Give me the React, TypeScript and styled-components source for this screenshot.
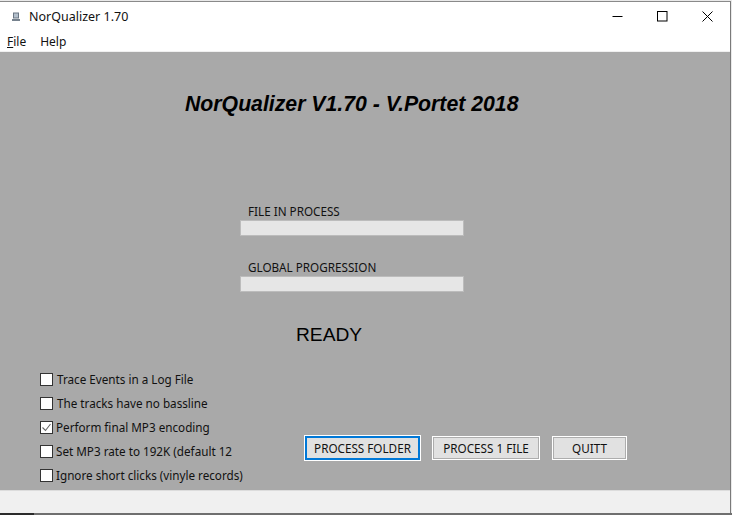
import * as React from "react";
import styled, { createGlobalStyle } from "styled-components";

const GlobalStyle = createGlobalStyle`
  html, body {
    margin: 0;
    padding: 0;
    background: #ffffff;
  }
  body {
    width: 732px;
    height: 515px;
    overflow: hidden;
    font-family: "Noto Sans", "Liberation Sans", sans-serif;
  }
`;

const Desktop = styled.div`
  width: 732px;
  height: 515px;
  box-sizing: border-box;
  padding-top: 1px;
  display: flex;
  flex-direction: column;
  background: #e9e9e9;
`;

const Window = styled.div`
  flex: 1;
  min-height: 0;
  display: flex;
  flex-direction: column;
  margin-right: 1px;
  background: #ffffff;
  border-top: 1px solid #8a8a8a;
  border-right: 1px solid #7a7a7a;
`;

const BottomEdge = styled.div`
  height: 2px;
  background: linear-gradient(to right, #2b2b2b 34px, #6f6f6f 34px);
`;

const TitleBar = styled.div`
  height: 29px;
  display: flex;
  align-items: center;
  color: #111111;
  font-size: 12.5px;
`;

const AppIcon = styled.svg`
  width: 10px;
  height: 10px;
  margin: 0 8px 0 11px;
`;

const TitleText = styled.span`
  flex: 1;
`;

const CaptionButton = styled.div`
  width: 45px;
  height: 29px;
  display: flex;
  align-items: center;
  justify-content: center;
`;

const MenuBar = styled.div`
  height: 20px;
  display: flex;
  align-items: center;
  gap: 14px;
  padding-left: 7px;
  font-size: 12px;
  color: #111111;
  border-bottom: 1px solid #f0f0f0;
`;

const Accel = styled.span`
  text-decoration: underline;
`;

const Panel = styled.div`
  flex: 1;
  display: flex;
  flex-direction: column;
  background: #a9a9a9;
`;

const Heading = styled.h1`
  margin: 40px 0 0 185px;
  font-family: "Liberation Sans", Arial, sans-serif;
  font-size: 21.25px;
  line-height: 24px;
  font-style: italic;
  font-weight: 700;
  color: #000000;
  white-space: nowrap;
`;

const ProgressGroup = styled.div<{ $top: number }>`
  margin: ${(p) => p.$top}px 0 0 240px;
  width: 224px;
`;

const ProgressLabel = styled.div`
  padding-left: 8px;
  height: 16px;
  line-height: 14px;
  font-size: 11.7px;
  color: #111111;
`;

const ProgressBar = styled.div`
  height: 16px;
  box-sizing: border-box;
  background: #e6e6e6;
  border: 1px solid #bcbcbc;
`;

const Status = styled.div`
  margin: 31px 0 0 296px;
  font-family: "Liberation Sans", Arial, sans-serif;
  font-size: 19.2px;
  line-height: 24px;
  color: #000000;
`;

const Controls = styled.div`
  display: flex;
  margin: 25px 0 0 40px;
`;

const Options = styled.div`
  width: 265px;
  display: flex;
  flex-direction: column;
  gap: 10px;
`;

const Option = styled.label`
  display: flex;
  align-items: center;
  height: 14px;
  font-size: 11.7px;
  white-space: nowrap;
  color: #111111;
`;

const Box = styled.span<{ $gap: number }>`
  width: 13px;
  height: 13px;
  box-sizing: border-box;
  margin-right: ${(p) => p.$gap}px;
  flex: none;
  display: flex;
  background: #ffffff;
  border: 1px solid #333333;
`;

const Buttons = styled.div`
  display: flex;
  gap: 12px;
  margin-top: 64px;
  align-self: flex-start;
`;

const Button = styled.button<{ $width: number; $focused?: boolean }>`
  width: ${(p) => p.$width}px;
  height: 24px;
  box-sizing: border-box;
  padding: 0;
  font-family: "Noto Sans", "Liberation Sans", sans-serif;
  font-size: 11.7px;
  color: #111111;
  background: #e1e1e1;
  border: 1px solid #ffffff;
  outline: 1px solid ${(p) => (p.$focused ? "#ffffff" : "#adadad")};
  outline-offset: -2px;
  ${(p) => p.$focused && "border: 2px solid #0078d7; outline: none; box-shadow: 0 0 0 1px #ffffff;"}
`;

const StatusBar = styled.div`
  height: 22px;
  background: #f0f0f0;
  border-top: 1px solid #dcdcdc;
`;

const options = [
  { label: "Trace Events in a Log File", gap: 4, checked: false },
  { label: "The tracks have no bassline", gap: 4, checked: false },
  { label: "Perform final MP3 encoding", gap: 3, checked: true },
  { label: "Set MP3 rate to 192K (default 12", gap: 3, checked: false },
  { label: "Ignore short clicks (vinyle records)", gap: 3, checked: false },
];

const App = () => (
  <Desktop>
    <GlobalStyle />
    <Window>
      <TitleBar>
        <AppIcon viewBox="0 0 10 10">
          <rect x="2.5" y="1" width="5" height="5" fill="#b4c0cc" stroke="#6a7684" />
          <rect x="1" y="7" width="8" height="2" fill="#76828e" />
        </AppIcon>
        <TitleText>NorQualizer 1.70</TitleText>
        <CaptionButton>
          <svg width="11" height="11" viewBox="0 0 11 11">
            <path d="M0.5 5.5h10" stroke="#000" fill="none" />
          </svg>
        </CaptionButton>
        <CaptionButton>
          <svg width="11" height="11" viewBox="0 0 11 11">
            <rect x="0.5" y="0.5" width="9.5" height="9.5" stroke="#000" fill="none" />
          </svg>
        </CaptionButton>
        <CaptionButton>
          <svg width="11" height="11" viewBox="0 0 11 11">
            <path d="M0.5 0.5l10 10M10.5 0.5l-10 10" stroke="#000" fill="none" />
          </svg>
        </CaptionButton>
      </TitleBar>
      <MenuBar>
        <span>
          <Accel>F</Accel>ile
        </span>
        <span>Help</span>
      </MenuBar>
      <Panel>
        <Heading>NorQualizer V1.70 - V.Portet 2018</Heading>
        <ProgressGroup $top={88}>
          <ProgressLabel>FILE IN PROCESS</ProgressLabel>
          <ProgressBar />
        </ProgressGroup>
        <ProgressGroup $top={24}>
          <ProgressLabel>GLOBAL PROGRESSION</ProgressLabel>
          <ProgressBar />
        </ProgressGroup>
        <Status>READY</Status>
        <Controls>
          <Options>
            {options.map((o) => (
              <Option key={o.label}>
                <Box $gap={o.gap}>
                  {o.checked && (
                    <svg width="11" height="11" viewBox="0 0 11 11">
                      <path d="M1.5 5.5l3 3 5-6.5" stroke="#666" strokeWidth="1.1" fill="none" />
                    </svg>
                  )}
                </Box>
                {o.label}
              </Option>
            ))}
          </Options>
          <Buttons>
            <Button $width={115} $focused>PROCESS FOLDER</Button>
            <Button $width={108}>PROCESS 1 FILE</Button>
            <Button $width={75}>QUITT</Button>
          </Buttons>
        </Controls>
      </Panel>
      <StatusBar />
    </Window>
    <BottomEdge />
  </Desktop>
);

export default App;
